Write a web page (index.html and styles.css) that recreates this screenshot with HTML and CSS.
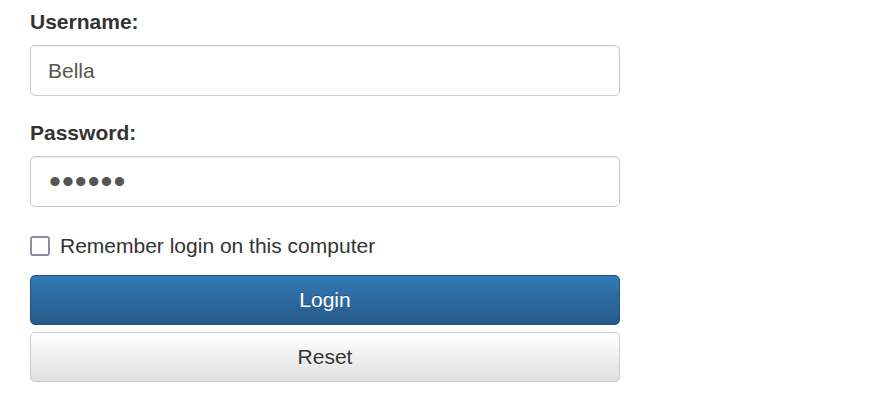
FILE: index.html
```html
<!DOCTYPE html>
<html>
<head>
<meta charset="utf-8">
<link rel="stylesheet" href="styles.css">
</head>
<body>
<form class="login">
  <label class="field-label" for="u">Username:</label>
  <input class="field" id="u" type="text" value="Bella">
  <label class="field-label" for="p">Password:</label>
  <input class="field field-pass" id="p" type="password" value="secret">
  <label class="remember"><span class="box"></span>Remember login on this computer</label>
  <button type="button" class="btn btn-primary">Login</button>
  <button type="button" class="btn btn-default">Reset</button>
</form>
</body>
</html>
```
FILE: styles.css
```css
html, body { margin: 0; padding: 0; background: #fff; }
body { font-family: "Liberation Sans", Arial, sans-serif; color: #333; }
.login {
  width: 590px;
  margin-left: 30px;
  padding-top: 9px;
  display: flex;
  flex-direction: column;
}
.field-label {
  font-weight: bold;
  font-size: 21px;
  line-height: 26px;
  margin-bottom: 10px;
}
.field {
  box-sizing: border-box;
  height: 51px;
  width: 590px;
  border: 1px solid #ccc;
  border-radius: 5px;
  padding: 0 17px;
  font-family: "Liberation Sans", Arial, sans-serif;
  font-size: 21px;
  color: #555;
  box-shadow: inset 0 1px 1px rgba(0,0,0,0.075);
  margin-bottom: 24px;
  outline: none;
}
.field-pass { font-size: 34px; letter-spacing: 1px; margin-bottom: 27px; padding-left: 18px; }
.remember {
  display: flex;
  align-items: center;
  font-size: 21px;
  line-height: 24px;
  color: #333;
  margin-bottom: 17px;
}
.box {
  box-sizing: border-box;
  width: 20px;
  height: 20px;
  border: 2px solid #8e8a9c;
  border-radius: 3px;
  margin-right: 10px;
}
.btn {
  box-sizing: border-box;
  width: 590px;
  height: 50px;
  border-radius: 5px;
  font-family: "Liberation Sans", Arial, sans-serif;
  font-size: 21px;
  cursor: pointer;
}
.btn-primary {
  color: #fff;
  border: 1px solid #245580;
  background: linear-gradient(to bottom, #337ab7 0%, #265a88 100%);
  text-shadow: 0 -1px 0 rgba(0,0,0,0.2);
  margin-bottom: 7px;
}
.btn-default {
  color: #333;
  border: 1px solid #ccc;
  background: linear-gradient(to bottom, #fff 0%, #e0e0e0 100%);
  text-shadow: 0 1px 0 #fff;
  box-shadow: 0 1px 1px rgba(0,0,0,0.05);
}
```
